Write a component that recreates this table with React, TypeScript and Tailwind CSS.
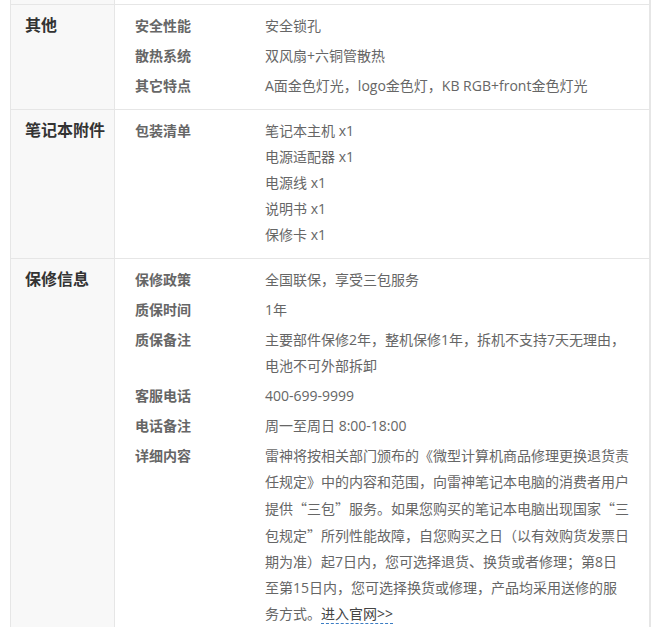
import React from 'react';

type Item = { label: string; lines: React.ReactNode[] };
type Section = { title: string; items: Item[] };

// curly quotes render full-width in the CJK face, as in the original page
const cjk = (text: string) =>
  text.split(/([“”])/).map((part, i) =>
    part === '“' || part === '”' ? (
      <span key={i} style={{ fontFamily: '"Noto Sans CJK SC", sans-serif' }}>
        {part}
      </span>
    ) : (
      <React.Fragment key={i}>{part}</React.Fragment>
    ),
  );

const sections: Section[] = [
  {
    title: '其他',
    items: [
      { label: '安全性能', lines: ['安全锁孔'] },
      { label: '散热系统', lines: ['双风扇+六铜管散热'] },
      { label: '其它特点', lines: ['A面金色灯光，logo金色灯，KB RGB+front金色灯光'] },
    ],
  },
  {
    title: '笔记本附件',
    items: [
      {
        label: '包装清单',
        lines: ['笔记本主机 x1', '电源适配器 x1', '电源线 x1', '说明书 x1', '保修卡 x1'],
      },
    ],
  },
  {
    title: '保修信息',
    items: [
      { label: '保修政策', lines: ['全国联保，享受三包服务'] },
      { label: '质保时间', lines: ['1年'] },
      {
        label: '质保备注',
        lines: ['主要部件保修2年，整机保修1年，拆机不支持7天无理由，', '电池不可外部拆卸'],
      },
      { label: '客服电话', lines: ['400-699-9999'] },
      { label: '电话备注', lines: ['周一至周日 8:00-18:00'] },
      {
        label: '详细内容',
        lines: [
          '雷神将按相关部门颁布的《微型计算机商品修理更换退货责',
          '任规定》中的内容和范围，向雷神笔记本电脑的消费者用户',
          cjk('提供“三包”服务。如果您购买的笔记本电脑出现国家“三'),
          cjk('包规定”所列性能故障，自您购买之日（以有效购货发票日'),
          '期为准）起7日内，您可选择退货、换货或者修理；第8日',
          '至第15日内，您可选择换货或修理，产品均采用送修的服',
          <>
            务方式。
            <a href="#" className="text-[#444] border-b border-dashed border-[#3b7dc4]">
              进入官网&gt;&gt;
            </a>
          </>,
        ],
      },
    ],
  },
];

export default function App() {
  return (
    <div
      className="min-h-screen bg-white text-[14px] leading-[26px] text-[#666]"
      style={{ fontFamily: '"Open Sans", "Noto Sans CJK SC", sans-serif' }}
    >
      <div className="ml-[10px] w-[641px] border-l border-r-2 border-[#e6e6e6]">
        {/* tail of the previous section */}
        <div className="flex h-[4px]">
          <div className="w-[104px] bg-[#f8f8f8] border-r border-[#e6e6e6]" />
          <div className="flex-1" />
        </div>

        {sections.map((s) => (
          <div key={s.title} className="flex border-t border-[#e6e6e6]">
            <div className="w-[104px] shrink-0 bg-[#f8f8f8] border-r border-[#e6e6e6] pl-[14px] pt-[8px] pb-[10px]">
              <h3 className="text-[16px] font-bold text-[#333] leading-[24px]">{s.title}</h3>
            </div>
            <div className="flex-1 pl-[20px] pt-[8px] pb-[10px] flex flex-col gap-[4px]">
              {s.items.map((it) => (
                <div key={it.label} className="flex">
                  <div className="w-[130px] shrink-0 font-bold text-[#666]">{it.label}</div>
                  <div className="flex-1 text-[#666]">
                    {it.lines.map((l, i) => (
                      <div key={i} className="whitespace-nowrap">
                        {l}
                      </div>
                    ))}
                  </div>
                </div>
              ))}
            </div>
          </div>
        ))}
      </div>
    </div>
  );
}
